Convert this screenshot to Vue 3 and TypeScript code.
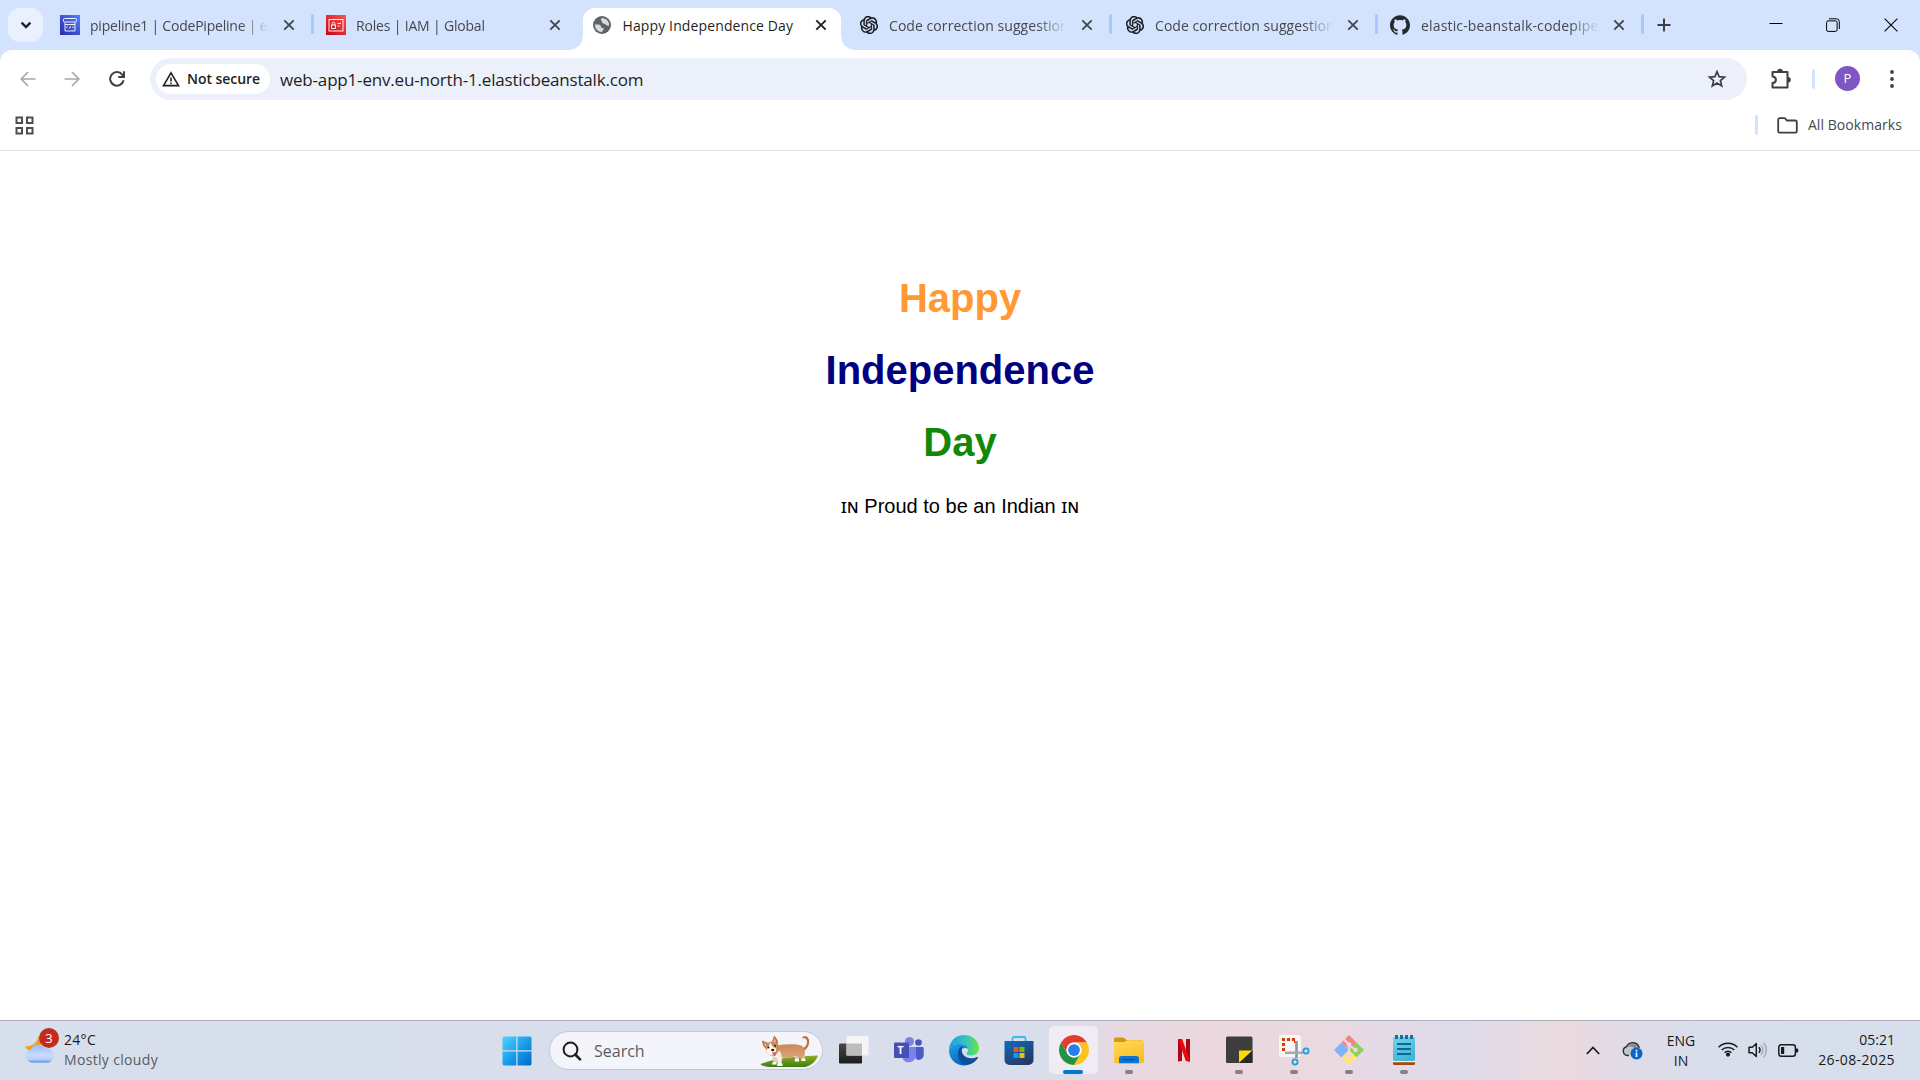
<script setup lang="ts">
interface Tab {
  title: string
  icon: 'pipeline' | 'iam' | 'globe' | 'openai' | 'github'
  active?: boolean
  divider?: boolean
  tracking: number
}

const tabs: Tab[] = [
  { title: 'pipeline1 | CodePipeline | eu-north-1', icon: 'pipeline', divider: true, tracking: -0.22 },
  { title: 'Roles | IAM | Global', icon: 'iam', tracking: -0.18 },
  { title: 'Happy Independence Day', icon: 'globe', active: true, tracking: 0.12 },
  { title: 'Code correction suggestions', icon: 'openai', divider: true, tracking: 0.06 },
  { title: 'Code correction suggestions', icon: 'openai', divider: true, tracking: 0.06 },
  { title: 'elastic-beanstalk-codepipeline', icon: 'github', divider: true, tracking: 0.16 },
]
</script>

<template>
  <div class="screen">
    <header class="tabstrip">
      <button class="tab-search">
        <svg width="16" height="16" viewBox="0 0 16 16"><path d="M3.600 5.600 8 10l4.400-4.400" fill="none" stroke="#1f1f1f" stroke-width="2.300" /></svg>
      </button>
      <div v-for="(tab, i) in tabs" :key="i" class="tab" :class="{ active: tab.active, divider: tab.divider }">
        <span class="favicon" :class="tab.icon">
          <svg v-if="tab.icon === 'pipeline'" width="20" height="20" viewBox="0 0 20 20">
            <defs><linearGradient id="pipe" x1="0" y1="1" x2="1" y2="0"><stop offset="0" stop-color="#2e27ad" /><stop offset="1" stop-color="#527fff" /></linearGradient></defs>
            <rect width="20" height="20" fill="url(#pipe)" />
            <g fill="none" stroke="#fff" stroke-width=".9">
              <rect x="3.500" y="3.500" width="13" height="3.500" rx="1" />
              <path d="M5 7.500v8.500h10V7.500M5 9.500h10M7.500 11.300l-1 1 1 1M12.500 11.300l1 1-1 1M10.500 11l-1 2.600" />
            </g>
          </svg>
          <svg v-else-if="tab.icon === 'iam'" width="20" height="20" viewBox="0 0 20 20">
            <defs><linearGradient id="iam" x1="0" y1="1" x2="1" y2="0"><stop offset="0" stop-color="#bd0816" /><stop offset="1" stop-color="#ff5252" /></linearGradient></defs>
            <rect width="20" height="20" fill="url(#iam)" />
            <g fill="none" stroke="#fff" stroke-width=".9">
              <rect x="3" y="4.500" width="14" height="11.500" />
              <path d="M5.500 10h4v3.500h-4zM6.200 10V8.500a1.300 1.500 0 0 1 2.600 0V10M11.500 8.500H15M11.500 11H13.500" />
            </g>
          </svg>
          <svg v-else-if="tab.icon === 'globe'" width="20" height="20" viewBox="0 0 20 20">
            <circle cx="10" cy="10" r="9" fill="#5f6368" />
            <path d="M2.900 9.300c1.700.5 3.900-.2 5.300.9 1.200 1 .3 2.300 1.900 2.500 1.300.2 1.900.3 1.600 1.500-.3 1.100-1.600 1.400-1.700 3A7.200 7.200 0 0 1 2.900 9.300Z" fill="#d8dadd" />
            <path d="M10.200 2.900c-1.500 1.100-1.900 1.900-.8 2.700.9.700.1 2.100 1.300 2.600 1.400.6 2 .1 2.700 1.400.6 1.100 2 1.400 3.700 1A7.200 7.200 0 0 0 10.200 2.900Z" fill="#d8dadd" />
          </svg>
          <svg v-else-if="tab.icon === 'openai'" width="18" height="18" viewBox="0 0 24 24">
            <path fill="#0d0d12" stroke="#0d0d12" stroke-width=".4" d="M22.2819 9.8211a5.9847 5.9847 0 0 0-.5157-4.9108 6.0462 6.0462 0 0 0-6.5098-2.9A6.0651 6.0651 0 0 0 4.9807 4.1818a5.9847 5.9847 0 0 0-3.9977 2.9 6.0462 6.0462 0 0 0 .7427 7.0966 5.98 5.98 0 0 0 .511 4.9107 6.051 6.051 0 0 0 6.5146 2.9001A5.9847 5.9847 0 0 0 13.2599 24a6.0557 6.0557 0 0 0 5.7718-4.2058 5.9894 5.9894 0 0 0 3.9977-2.9001 6.0557 6.0557 0 0 0-.7475-7.0729zm-9.022 12.6081a4.4755 4.4755 0 0 1-2.8764-1.0408l.1419-.0804 4.7783-2.7582a.7948.7948 0 0 0 .3927-.6813v-6.7369l2.02 1.1686a.071.071 0 0 1 .038.052v5.5826a4.504 4.504 0 0 1-4.4945 4.4944zm-9.6607-4.1254a4.4708 4.4708 0 0 1-.5346-3.0137l.142.0852 4.783 2.7582a.7712.7712 0 0 0 .7806 0l5.8428-3.3685v2.3324a.0804.0804 0 0 1-.0332.0615L9.74 19.9502a4.4992 4.4992 0 0 1-6.1408-1.6464zM2.3408 7.8956a4.485 4.485 0 0 1 2.3655-1.9728V11.6a.7664.7664 0 0 0 .3879.6765l5.8144 3.3543-2.0201 1.1685a.0757.0757 0 0 1-.071 0l-4.8303-2.7865A4.504 4.504 0 0 1 2.3408 7.872zm16.5963 3.8558L13.1038 8.364 15.1192 7.2a.0757.0757 0 0 1 .071 0l4.8303 2.7913a4.4944 4.4944 0 0 1-.6765 8.1042v-5.6772a.79.79 0 0 0-.407-.667zm2.0107-3.0231l-.142-.0852-4.7735-2.7818a.7759.7759 0 0 0-.7854 0L9.409 9.2297V6.8974a.0662.0662 0 0 1 .0284-.0615l4.8303-2.7866a4.4992 4.4992 0 0 1 6.6802 4.66zM8.3065 12.863l-2.02-1.1638a.0804.0804 0 0 1-.038-.0567V6.0742a4.4992 4.4992 0 0 1 7.3757-3.4537l-.142.0805L8.704 5.459a.7948.7948 0 0 0-.3927.6813zm1.0976-2.3654l2.602-1.4998 2.6069 1.4998v2.9994l-2.5974 1.4997-2.6067-1.4997Z" />
          </svg>
          <svg v-else width="20" height="20" viewBox="0 0 24 24">
            <path fill="#24292f" d="M12 .297c-6.63 0-12 5.373-12 12 0 5.303 3.438 9.8 8.205 11.385.6.113.82-.258.82-.577 0-.285-.01-1.04-.015-2.04-3.338.724-4.042-1.61-4.042-1.61C4.422 18.07 3.633 17.7 3.633 17.7c-1.087-.744.084-.729.084-.729 1.205.084 1.838 1.236 1.838 1.236 1.07 1.835 2.809 1.305 3.495.998.108-.776.417-1.305.76-1.605-2.665-.3-5.466-1.332-5.466-5.93 0-1.31.465-2.38 1.235-3.22-.135-.303-.54-1.523.105-3.176 0 0 1.005-.322 3.3 1.23.96-.267 1.98-.399 3-.405 1.02.006 2.04.138 3 .405 2.28-1.552 3.285-1.23 3.285-1.23.645 1.653.24 2.873.12 3.176.765.84 1.23 1.91 1.23 3.22 0 4.61-2.805 5.625-5.475 5.92.42.36.81 1.096.81 2.22 0 1.606-.015 2.896-.015 3.286 0 .315.21.69.825.57C20.565 22.092 24 17.592 24 12.297c0-6.627-5.373-12-12-12" />
          </svg>
        </span>
        <span class="title" :style="{ letterSpacing: tab.tracking + 'px' }">{{ tab.title }}</span>
        <svg class="close" width="12" height="12" viewBox="0 0 12 12"><path d="M1.300 1.300l9.400 9.400M10.700 1.300l-9.400 9.400" stroke="currentColor" stroke-width="1.900" /></svg>
      </div>
      <svg class="plus" width="14" height="14" viewBox="0 0 14 14"><path d="M7 .5v13M.5 7h13" stroke="#3c4043" stroke-width="2" /></svg>
      <div class="window-controls">
        <svg width="14" height="14" viewBox="0 0 14 14"><path d="M.5 5.500h13" stroke="#000" /></svg>
        <svg width="14" height="14" viewBox="0 0 14 14" fill="none" stroke="#000"><rect x=".6" y="2.900" width="10.500" height="10.500" rx="1.500" /><path d="M3 .8h7.500a2.800 2.800 0 0 1 2.800 2.800V11" /></svg>
        <svg width="14" height="14" viewBox="0 0 14 14"><path d="M.6.6l12.800 12.800M13.400.6.6 13.400" stroke="#000" stroke-width="1.100" /></svg>
      </div>
    </header>

    <div class="toolbar-back">
      <div class="toolbar">
        <svg class="nav back" width="16" height="16" viewBox="0 0 16 16" fill="none" stroke="#a6a8ab" stroke-width="1.700"><path d="M15.500 8H1.500M8 1 1.200 8 8 15" /></svg>
        <svg class="nav forward" width="16" height="16" viewBox="0 0 16 16" fill="none" stroke="#a6a8ab" stroke-width="1.700"><path d="M.5 8h14M8 1l6.800 7L8 15" /></svg>
        <svg class="nav reload" width="16" height="16" viewBox="0 0 16 16" fill="none" stroke="#3c4043" stroke-width="2"><path d="M14.600 9.200A6.800 6.800 0 1 1 13.400 3.800l1 1.200" /><path d="M15 .3V6H9.300" /></svg>
        <div class="omnibox">
          <div class="chip">
            <svg width="18" height="16" viewBox="0 0 18 16" fill="none" stroke="#1f1f1f" stroke-width="1.600"><path d="M9 1.800 16.500 14.600H1.500Z" stroke-linejoin="miter" /><path d="M9 6.400v4M9 11.500v1.700" stroke-width="1.500" /></svg>
            <span>Not secure</span>
          </div>
          <span class="url">web-app1-env.eu-north-1.elasticbeanstalk.com</span>
          <svg class="star" width="20" height="20" viewBox="0 0 20 20"><path d="M10 2.600l2.100 5 5.400.5-4.100 3.500 1.300 5.300L10 14l-4.700 2.900 1.300-5.300-4.100-3.500 5.400-.5Z" fill="none" stroke="#3c4043" stroke-width="1.700" /></svg>
        </div>
        <svg class="puzzle" width="22" height="22" viewBox="0 0 22 22"><path d="M2.500 4H17.500V19.500H2.500V15c2.400-.2 3.400-1.600 3.400-3.300S4.900 8.600 2.500 8.400Z" fill="none" stroke="#3c4043" stroke-width="2" stroke-linejoin="round" /><path d="M7.200 3.500a2.800 2.800 0 0 1 5.600 0ZM18 9a2.800 2.800 0 0 1 0 5.600Z" fill="#3c4043" /></svg>
        <i class="bar"></i>
        <span class="avatar">P</span>
        <svg class="dots" width="6" height="20" viewBox="0 0 6 20" fill="#3c4043"><circle cx="3" cy="3" r="1.900" /><circle cx="3" cy="10" r="1.900" /><circle cx="3" cy="17" r="1.900" /></svg>
      </div>
      <div class="bookmarks">
        <svg class="grid" width="19" height="19" viewBox="0 0 19 19" fill="none" stroke="#4a4d51" stroke-width="2"><path d="M1.500 1.500h5.500v5.500H1.500zM12 1.500h5.500v5.500H12zM1.500 12h5.500v5.500H1.500zM12 12h5.500v5.500H12z" /></svg>
        <i class="bar"></i>
        <svg class="folder" width="21" height="17" viewBox="0 0 21 17"><path d="M1.200 14.200V2.700a1.500 1.500 0 0 1 1.500-1.500h5.100l2.200 2.300h8.300a1.500 1.500 0 0 1 1.500 1.500v9.200a1.500 1.500 0 0 1-1.500 1.500H2.700a1.500 1.500 0 0 1-1.500-1.500Z" fill="none" stroke="#3c4043" stroke-width="1.800" /></svg>
        <span>All Bookmarks</span>
      </div>
    </div>

    <main class="page">
      <h1 class="saffron">Happy</h1>
      <h1 class="navy">Independence</h1>
      <h1 class="green">Day</h1>
      <p><span class="flag">ɪɴ</span> Proud to be an Indian <span class="flag">ɪɴ</span></p>
    </main>

    <footer class="taskbar">
      <div class="weather">
        <div class="weather-icon">
          <svg width="32" height="32" viewBox="0 0 32 32">
            <defs><linearGradient id="cloud" x1="0" y1="0" x2="0" y2="1"><stop offset="0" stop-color="#93bbf8" /><stop offset=".6" stop-color="#cbdcfc" /><stop offset=".85" stop-color="#b4cdf8" /><stop offset="1" stop-color="#4f86e0" /></linearGradient></defs>
            <path d="M14 3c0 6-5 10.500-13 10.500 2 4.500 8 6 12 3.500S20 8 14 3Z" fill="#f2a01c" />
            <path d="M8 29.500a6.800 6.800 0 0 1-.5-13.500C8.500 10.500 17.500 9.500 21 15.500a7 7 0 0 1 3 14Z" fill="url(#cloud)" />
          </svg>
          <b>3</b>
        </div>
        <div class="weather-text"><span class="temp">24°C</span><span class="cond">Mostly cloudy</span></div>
      </div>

      <div class="apps">
        <svg class="start" width="30" height="30" viewBox="0 0 30 30">
          <defs><linearGradient id="win" gradientUnits="userSpaceOnUse" x1="0" y1="0" x2="30" y2="30"><stop offset="0" stop-color="#4fd6ff" /><stop offset=".5" stop-color="#1a9fec" /><stop offset="1" stop-color="#0067c6" /></linearGradient></defs>
          <path d="M2 .5h12.300v13.700H.5V2A1.500 1.500 0 0 1 2 .5ZM15.500.5H28A1.500 1.500 0 0 1 29.500 2v12.200h-14ZM.5 15.400h13.800v14H2A1.500 1.500 0 0 1 .5 28ZM15.500 15.400h14V28a1.500 1.500 0 0 1-1.500 1.400H15.500Z" fill="url(#win)" />
        </svg>
        <div class="search">
          <svg width="20" height="20" viewBox="0 0 20 20" fill="none" stroke="#1f1f1f" stroke-width="2"><circle cx="8.500" cy="8.500" r="6.900" /><path d="M13.300 13.500 18 18.400" stroke-width="2.600" stroke-linecap="round" /></svg>
          <span>Search</span>
          <svg class="corgi" width="58" height="34" viewBox="0 0 58 34">
            <defs>
              <linearGradient id="grass" x1="0" y1="0" x2="0" y2="1"><stop offset="0" stop-color="#93ad25" /><stop offset="1" stop-color="#3f7d12" /></linearGradient>
              <linearGradient id="fur" x1="0" y1="0" x2="0" y2="1"><stop offset="0" stop-color="#c98a58" /><stop offset="1" stop-color="#dda679" /></linearGradient>
            </defs>
            <path d="M.5 30C12 25.500 28 22.500 58 21.500c-2 6-7 10-13 11.500H12C6 33 2 32 .5 30Z" fill="url(#grass)" />
            <path d="M40.500 15c5-1 7.500-5 6.200-9-.9-2-2.700-2.200-5-1.500C43.500.5 48 1.500 49 6c1 5.500-2.500 10-7 12Z" fill="#b97342" />
            <path d="M34.500 19l.5 6.500h3.500l1.500-7ZM39 18l2.500 8h3.500l-1-10ZM12 20l1.500 9h3.500L19 21Z" fill="#e6cdbb" />
            <path d="M14 12.500c6-2.500 22-3 27-1 4.500 2 4.800 7.500 2.500 12l-2 1.500-5.500-3c-5 2-12 2.500-17 1.500-4-1-7-6-5-11Z" fill="url(#fur)" />
            <path d="M12 16c3-1 8 0 9 3s1 7 .5 11.500l-3.500.5-1-7c-4-1-6-4-5-8Z" fill="#f7eee6" />
            <path d="M17.500 29.500h5v2.500h-5.500ZM12.500 28.200h4v2.300h-4.500ZM35 25h4v2.500h-4.500ZM41.500 24.800h4v2.200h-4Z" fill="#fff" />
            <path d="M2 6.500 8.500 9 5.500 14.500C3.500 12.500 2 10 2 6.500ZM14 1.500c3 2.500 4.500 5.500 4 9L12 8Z" fill="#bd7746" />
            <path d="M3.600 8.500 7 10l-1.500 2.500ZM14.300 4.300c1.300 1.500 1.800 3 1.700 4.700l-2.500-1Z" fill="#eab5a2" />
            <path d="M5.500 12C7 8 11 6.500 15 8c4 1 5 5 3.500 9s-6 5.500-9 4-4-5-4-9Z" fill="#cc8b59" />
            <path d="M10 8c1.500 3 2.500 5 6 6.500 1 3-2 6.500-5 6.500-2.500 0-5-2.500-4.500-5.500 2-1.500 3-4 3.500-7.500Z" fill="#fff7f0" />
            <circle cx="8.500" cy="13.500" r="1" fill="#2b1b14" /><circle cx="15" cy="11.800" r="1" fill="#2b1b14" />
            <ellipse cx="12.700" cy="16" rx="1.600" ry="1.200" fill="#2b1b14" />
            <path d="M12.300 18.200l3.400-.2c.8 2 .3 3.800-.8 4-1.500.2-2.300-1.800-2.600-3.800Z" fill="#e75d70" />
          </svg>
        </div>
        <span class="app">
          <svg width="32" height="32" viewBox="0 0 32 32">
            <defs><linearGradient id="tv" x1="0" y1="0" x2="0" y2="1"><stop offset="0" stop-color="#474747" /><stop offset="1" stop-color="#1c1c1c" /></linearGradient></defs>
            <rect x="1" y="9.500" width="23" height="20" rx="1" fill="url(#tv)" /><rect x="8.500" y="2" width="22" height="19.500" rx="1" fill="#f5f5f5" /><path d="M8.500 9.500H24v12H8.500Z" fill="#bdbdbd" />
          </svg>
        </span>
        <span class="app">
          <svg width="32" height="32" viewBox="0 0 32 32">
            <circle cx="25.500" cy="8.500" r="3.300" fill="#4b53bc" /><path d="M21 13h8.500a1.200 1.200 0 0 1 1.200 1.200V20.500a5 5 0 0 1-8 4.300Z" fill="#5059c9" />
            <circle cx="16.500" cy="7.500" r="4.500" fill="#7b83eb" /><path d="M10 13h13v8.500a7.300 7.300 0 0 1-13 4Z" fill="#7b83eb" />
            <rect x="1" y="8.500" width="15" height="15.500" rx="1.300" fill="#464eb8" />
          </svg>
          <b class="teams">T</b>
        </span>
        <span class="app">
          <svg width="32" height="32" viewBox="0 0 32 32">
            <defs>
              <linearGradient id="e1" x1="0" y1=".3" x2="1" y2=".3"><stop offset="0" stop-color="#1b9de0" /><stop offset=".5" stop-color="#2fc0c8" /><stop offset="1" stop-color="#6be34a" /></linearGradient>
              <linearGradient id="e2" x1="0" y1="0" x2=".5" y2="1"><stop offset="0" stop-color="#1ea5e9" /><stop offset="1" stop-color="#0b62c0" /></linearGradient>
            </defs>
            <path d="M1 15.500C1.500 7 8 1 16 1c9 0 15 6.500 15 13 0 5-3.500 7.500-8 7.500-3 0-5-1-4.500-2 .7-1 1.500-2 1.500-3.800 0-3-3.500-5.700-8.500-5.700C7 10 3 12 1 15.500Z" fill="url(#e1)" />
            <path d="M1 16c1.500-4 5.500-6 10-6 5.500 0 9 2.500 9 5-3-2-7.500-.5-8 3.500-.3 5 4 8.500 8.500 12.300A15 15 0 0 1 1 16Z" fill="url(#e2)" />
            <path d="M10 19.500c0-3.500 1.500-6.500 5-7.800-2 3.500-1.500 6.800.5 9.300 3.500 4 9.500 4 13.500 2 .8-.3 1.200.3.800 1C27.500 28 23 31 18 31c-5-1.500-8-6-8-11.500Z" fill="#0c4f9a" />
          </svg>
        </span>
        <span class="app">
          <svg width="32" height="32" viewBox="0 0 32 32">
            <defs><linearGradient id="st" x1="0" y1="0" x2=".6" y2="1"><stop offset="0" stop-color="#0f6cbd" /><stop offset="1" stop-color="#243a68" /></linearGradient></defs>
            <path d="M9.500 9V4.500A1.500 1.500 0 0 1 11 3h10a1.500 1.500 0 0 1 1.500 1.500V9" fill="none" stroke="#33bdf2" stroke-width="1.800" />
            <path d="M1.500 7h29v19a5 5 0 0 1-5 5h-19a5 5 0 0 1-5-5Z" fill="url(#st)" />
            <path d="M10.500 13h5v5h-5Z" fill="#f25022" /><path d="M16.500 13h5v5h-5Z" fill="#7fba00" /><path d="M10.500 19h5v5h-5Z" fill="#00a4ef" /><path d="M16.500 19h5v5h-5Z" fill="#ffb900" />
          </svg>
        </span>
        <span class="app current">
          <svg width="30" height="30" viewBox="0 0 48 48">
            <path d="M24 12H44.780A24 24 0 0 0 3.220 12.003L13.610 30A12 12 0 0 1 24 12Z" fill="#e33b2e" />
            <path d="M34.390 30.003 24.003 48A24 24 0 0 0 44.780 12H24A12 12 0 0 1 34.390 30.003Z" fill="#fcc31e" />
            <path d="M13.610 30.003 3.218 12.006A24 24 0 0 0 24.003 48L34.396 30.003A12 12 0 0 1 13.610 30.003Z" fill="#229342" />
            <circle cx="24" cy="24" r="12" fill="#fff" /><circle cx="24" cy="24" r="9.400" fill="#2b7de9" />
          </svg>
        </span>
        <span class="app running">
          <svg width="32" height="32" viewBox="0 0 32 32">
            <defs><linearGradient id="fo" x1="0" y1="0" x2=".5" y2="1"><stop offset="0" stop-color="#ffda5e" /><stop offset="1" stop-color="#fbbe25" /></linearGradient></defs>
            <path d="M1 5a1.500 1.500 0 0 1 1.500-1.500h8L13.500 6H29v5H1Z" fill="#d9980a" />
            <path d="M1 8h10.500L14 6.300h15.500A1.500 1.500 0 0 1 31 7.800v20a1.500 1.500 0 0 1-1.500 1.500h-27A1.500 1.500 0 0 1 1 27.800Z" fill="url(#fo)" />
            <path d="M6 29.300V24.500A2.500 2.500 0 0 1 8.500 22h15a2.500 2.500 0 0 1 2.500 2.500v4.800Z" fill="#0f74d1" /><path d="M10 25.700h12" stroke="#0a4f94" stroke-width="1.200" />
          </svg>
        </span>
        <span class="app">
          <svg width="32" height="32" viewBox="0 0 32 32"><path d="M10 5h4v22l-4 .5ZM18 5h4v22.500L18 27Z" fill="#b1060f" /><path d="M10 5h4.200L22 27.500 17.800 27Z" fill="#e50914" /></svg>
        </span>
        <span class="app running">
          <svg width="32" height="32" viewBox="0 0 32 32"><rect x="3" y="2.500" width="26.500" height="26.500" rx="1.500" fill="#3d3d3d" /><path d="M16 16.500h13.500L16 29Z" fill="#ffd900" /><path d="M29.500 16.500V29H16Z" fill="#2b2b22" /></svg>
        </span>
        <span class="app running">
          <svg width="32" height="32" viewBox="0 0 32 32">
            <rect x="1" y="1" width="22" height="22" rx="3" fill="#f7f7f8" />
            <path d="M5.500 17V5.500H17.500V9" fill="none" stroke="#d83b01" stroke-width="3" stroke-dasharray="3 2" />
            <path d="M18.500 7v17" stroke="#8c949c" stroke-width="2.600" /><path d="M7 18.800h18" stroke="#a3abb3" stroke-width="2.600" />
            <circle cx="28" cy="17" r="2.600" fill="none" stroke="#1c9be6" stroke-width="1.700" /><circle cx="17" cy="28" r="2.600" fill="none" stroke="#1c9be6" stroke-width="1.700" />
          </svg>
        </span>
        <span class="app running">
          <svg width="32" height="32" viewBox="0 0 32 32">
            <path d="M16 1 23.500 8.500 16 16 8.500 8.500Z" fill="#f28583" /><path d="M23.500 8.500 31 16l-7.500 7.500L16 16Z" fill="#8bd15c" /><path d="M8.500 8.500 16 16l-7.500 7.500L1 16Z" fill="#80b3ff" /><path d="M16 16l7.500 7.500L16 31l-7.500-7.500Z" fill="#ffe27a" />
            <path d="M10 4.500 16 10.500V22M16 11l6.500 5" fill="none" stroke="#ecd9e0" stroke-width="2.200" /><circle cx="16" cy="10.500" r="2.300" fill="#ecd9e0" /><circle cx="16" cy="22" r="2.300" fill="#ecd9e0" /><circle cx="22.500" cy="16" r="2.300" fill="#ecd9e0" />
          </svg>
        </span>
        <span class="app running">
          <svg width="32" height="32" viewBox="0 0 32 32">
            <defs><linearGradient id="np" x1="0" y1="0" x2=".4" y2="1"><stop offset="0" stop-color="#74d3ec" /><stop offset="1" stop-color="#42b6d8" /></linearGradient></defs>
            <path d="M5 27h22v2.500a1.500 1.500 0 0 1-1.500 1.500h-19A1.500 1.500 0 0 1 5 29.500Z" fill="#a34a0c" /><path d="M5 26h22v2.200H5Z" fill="#f3f3f3" />
            <rect x="5" y="3" width="22" height="24" rx="1.500" fill="url(#np)" />
            <path d="M9 9.900h14M9 14.900h14M9 19.900h14" stroke="#0b6a92" stroke-width="2" />
            <path d="M8.500 1v4M13.500 1v4M18.500 1v4M23.500 1v4" stroke="#0b6a92" stroke-width="2.800" />
          </svg>
        </span>
      </div>

      <div class="tray">
        <svg class="up" width="14" height="9" viewBox="0 0 14 9"><path d="M.8 8 7 1.500 13.200 8" fill="none" stroke="#1a1a1a" stroke-width="1.700" /></svg>
        <svg class="cloud" width="21" height="20" viewBox="0 0 21 20">
          <path d="M7 15.500H5.500a4.500 4.500 0 0 1-1-8.800C6.500 2 14 1 16.500 6l.8 2" fill="#c4c6ca" stroke="#333" stroke-width="1.500" /><path d="M5.500 7c3.500-1.500 6 0 8 2.500l3-2C14 2.500 8 2.500 5.500 7Z" fill="#8b8b8b" />
          <circle cx="14.500" cy="13.500" r="6" fill="#0a66c8" /><path d="M14.500 12.500v4.500M14.500 9.700v1.700" stroke="#fff" stroke-width="1.700" />
        </svg>
        <div class="lang"><span>ENG</span><span>IN</span></div>
        <svg class="wifi" width="20" height="16" viewBox="0 0 20 16" fill="none" stroke="#1a1a1a" stroke-width="1.500"><path d="M.7 6.200a13 13 0 0 1 18.600 0M3.700 9a9 9 0 0 1 12.600 0M6.600 11.700a5 5 0 0 1 6.800 0" /><circle cx="10" cy="13.600" r="1.300" fill="#1a1a1a" /></svg>
        <svg class="volume" width="20" height="18" viewBox="0 0 20 18" fill="none" stroke="#1a1a1a" stroke-width="1.500"><path d="M1 6.200h3.300L8.300 2.500v13l-4-3.700H1Z" stroke-linejoin="round" /><path d="M10.800 6.300a4 4 0 0 1 0 5.400" /><path d="M13 4.200a7 7 0 0 1 0 9.600M15.500 1.800a10.500 10.500 0 0 1 0 14.400" stroke="#a9abb2" /></svg>
        <svg class="battery" width="21" height="13" viewBox="0 0 21 13"><rect x=".8" y=".8" width="16.600" height="11.400" rx="2.500" fill="none" stroke="#1a1a1a" stroke-width="1.500" /><path d="M3 3h3.200v7H3ZM18 4.500h1.200a1 1 0 0 1 1 1v2a1 1 0 0 1-1 1H18Z" fill="#1a1a1a" /></svg>
        <div class="clock"><span>05:21</span><span class="date">26-08-2025</span></div>
      </div>
    </footer>
  </div>
</template>

<style>
body { margin: 0; background: #fff; }
</style>

<style scoped>
.screen { display: flex; flex-direction: column; width: 1920px; height: 1080px; overflow: hidden; font: 14px/20px "Open Sans", "Noto Sans", sans-serif; color: #1f1f1f; }
.screen * { box-sizing: border-box; }
svg { display: block; flex: none; }

.tabstrip { display: flex; flex: none; height: 50px; padding-left: 8px; background: #d3e3fd; }
.tab-search { display: flex; align-items: center; justify-content: center; width: 35px; height: 34px; margin: 8px 4px 0 0; padding: 0; border: 0; border-radius: 12px; background: #e9f1fe; }
.tab { position: relative; display: flex; align-items: center; width: 266px; height: 50px; padding-left: 13px; color: #45494d; }
.tab.divider::after { content: ""; position: absolute; right: -1px; top: 14px; width: 3px; height: 20px; border-radius: 2px; background: #a8c7fa; }
.favicon { display: flex; align-items: center; justify-content: center; width: 20px; height: 20px; }
.favicon.openai { margin: 0 -1px 0 1px; }
.title { flex: none; width: 178px; margin-left: 10px; overflow: hidden; white-space: nowrap; padding-top: 1px; -webkit-mask-image: linear-gradient(90deg, #000 150px, transparent 179px); mask-image: linear-gradient(90deg, #000 150px, transparent 179px); }
.openai + .title, .github + .title { padding-left: 1px; }
.close { margin-left: 15px; }
.tab.active { color: #1f1f1f; z-index: 0; }
.tab.active .title { -webkit-mask-image: none; mask-image: none; padding-left: .5px; }
.tab.active::before { content: ""; position: absolute; z-index: -1; left: 4px; right: 4px; top: 8px; bottom: 0; background: #fff; border-radius: 12px 12px 0 0; }
.tab.active::after { content: ""; position: absolute; z-index: -2; left: -10px; right: -10px; bottom: 0; height: 14px; background: radial-gradient(circle at 0 0, transparent 13.500px, #fff 14px) left / 14px 14px no-repeat, radial-gradient(circle at 100% 0, transparent 13.500px, #fff 14px) right / 14px 14px no-repeat; }
.plus { margin: 18px 0 0 14px; }
.window-controls { display: flex; gap: 43px; margin: 18px 22px 0 auto; }
.window-controls svg:last-child { margin-left: 1px; }

.toolbar-back { flex: none; background: #d3e3fd; }
.toolbar { display: flex; align-items: center; height: 58px; padding-left: 20px; background: #fff; border-radius: 12px 12px 0 0; }
.nav { margin-right: 29px; margin-top: -1px; }
.forward { margin-right: 28px; margin-left: -1px; }
.reload { margin-right: 25px; margin-left: 1px; }
.omnibox { display: flex; align-items: center; width: 1597px; height: 42px; padding: 0 20px 0 6px; border-radius: 21px; background: #ebf0fa; }
.chip { display: flex; align-items: center; width: 114px; height: 30px; padding-left: 6px; border-radius: 15px; background: #fff; font-weight: 600; white-space: nowrap; }
.chip span { margin-left: 7px; letter-spacing: -.05px; }
.url { margin-left: 10px; padding-top: 1px; font-size: 17px; letter-spacing: -0.18px; white-space: nowrap; }
.star { margin-left: auto; }
.puzzle { margin-left: 23px; margin-top: -1px; }
.bar { width: 3px; height: 20px; border-radius: 2px; background: #d3e3fd; }
.toolbar .bar { margin-left: 20px; }
.avatar { width: 25px; height: 25px; margin-left: 20px; margin-top: -1px; border-radius: 50%; background: #7e57c2; color: #fff; font-size: 13px; line-height: 25px; text-align: center; }
.dots { margin-left: 29px; margin-top: -1px; }
.bookmarks { display: flex; align-items: center; height: 43px; padding: 0 18px 8px 15px; background: #fff; border-bottom: 1px solid #dfe1e5; color: #45494d; }
.bookmarks span { letter-spacing: .06px; }
.grid { margin-top: 1px; }
.bookmarks .bar { margin-left: auto; }
.folder { margin: 1px 10px 0 19px; }

.page { flex: 1; padding-top: 125px; font-family: "Liberation Sans", Arial, sans-serif; font-size: 20px; line-height: normal; color: #000; text-align: center; }
h1 { margin: 0 0 27px; font-size: 40px; line-height: 45px; font-weight: 700; }
.saffron { color: #ff9933; }
.navy { color: #000080; }
.green { color: #138808; }
p { margin: 0; line-height: 28px; }
.flag { font-family: "Noto Sans", sans-serif; font-size: 19px; }

.taskbar { display: flex; flex: none; position: relative; height: 60px; border-top: 1px solid #b0b0ba; background: linear-gradient(90deg, #d7dfec 0, #d9deeb 1060px, #e6d9e4 1110px, #ebd8de 1200px, #ead9e0 1330px, #e2dae8 1400px, #dddbea 1460px, #e9dae1 1540px, #ead9df 1570px, #dfdce8 1630px, #d8deeb 1710px, #d7dfec 1920px); }
.weather { display: flex; width: 502px; padding: 9px 0 0 24px; }
.weather-icon { position: relative; width: 32px; height: 32px; margin-top: 3px; }
.weather-icon b { position: absolute; left: 15px; top: -5px; width: 20px; height: 20px; border-radius: 50%; background: #c42b1c; color: #fff; font-size: 13px; font-weight: 400; line-height: 20px; text-align: center; }
.weather-text { display: flex; flex-direction: column; margin-left: 8px; }
.temp { color: #1a1a1a; letter-spacing: .3px; }
.cond { color: #565b63; letter-spacing: .33px; }
.apps { display: flex; align-items: flex-start; }
.start { margin-top: 15px; }
.search { display: flex; align-items: center; width: 274px; height: 39px; margin: 10px 5px 0 17px; padding: 0 4px 0 12px; border: 1px solid #c3c8d6; border-radius: 20px; background: #f3f5fa; font-size: 16px; color: #5a5c60; }
.search span { margin-left: 12px; }
.corgi { margin-left: auto; }
.app { position: relative; display: flex; align-items: center; justify-content: center; width: 49px; height: 48px; margin: 5px 6px 0 0; border-radius: 5px; }
.search + .app { margin-left: 1px; }
.app.current { background: #f1ecf3; }
.app.current::after { content: ""; position: absolute; left: 14px; bottom: 0; width: 20px; height: 4px; border-radius: 2px; background: #0078d4; }
.app.running::after { content: ""; position: absolute; left: 21px; bottom: 0; width: 8px; height: 4px; border-radius: 2px; background: #857f86; }
.teams { position: absolute; left: 9px; top: 14px; width: 15px; color: #fff; font-size: 11px; line-height: 20px; text-align: center; }
.tray { display: flex; align-items: flex-start; margin-left: auto; padding-right: 25px; color: #1a1a1a; }
.up { margin: 25px 22px 0 0; }
.cloud { margin: 19px 24px 0 0; }
.lang { display: flex; flex-direction: column; align-items: center; width: 28px; margin: 10px 23px 0 0; }
.wifi { margin: 20px 10px 0 0; }
.volume { margin: 20px 10px 0 0; }
.battery { margin: 23px 0 0; }
.clock { display: flex; flex-direction: column; align-items: flex-end; width: 96px; margin-top: 9px; }
.date { letter-spacing: .38px; }
</style>
